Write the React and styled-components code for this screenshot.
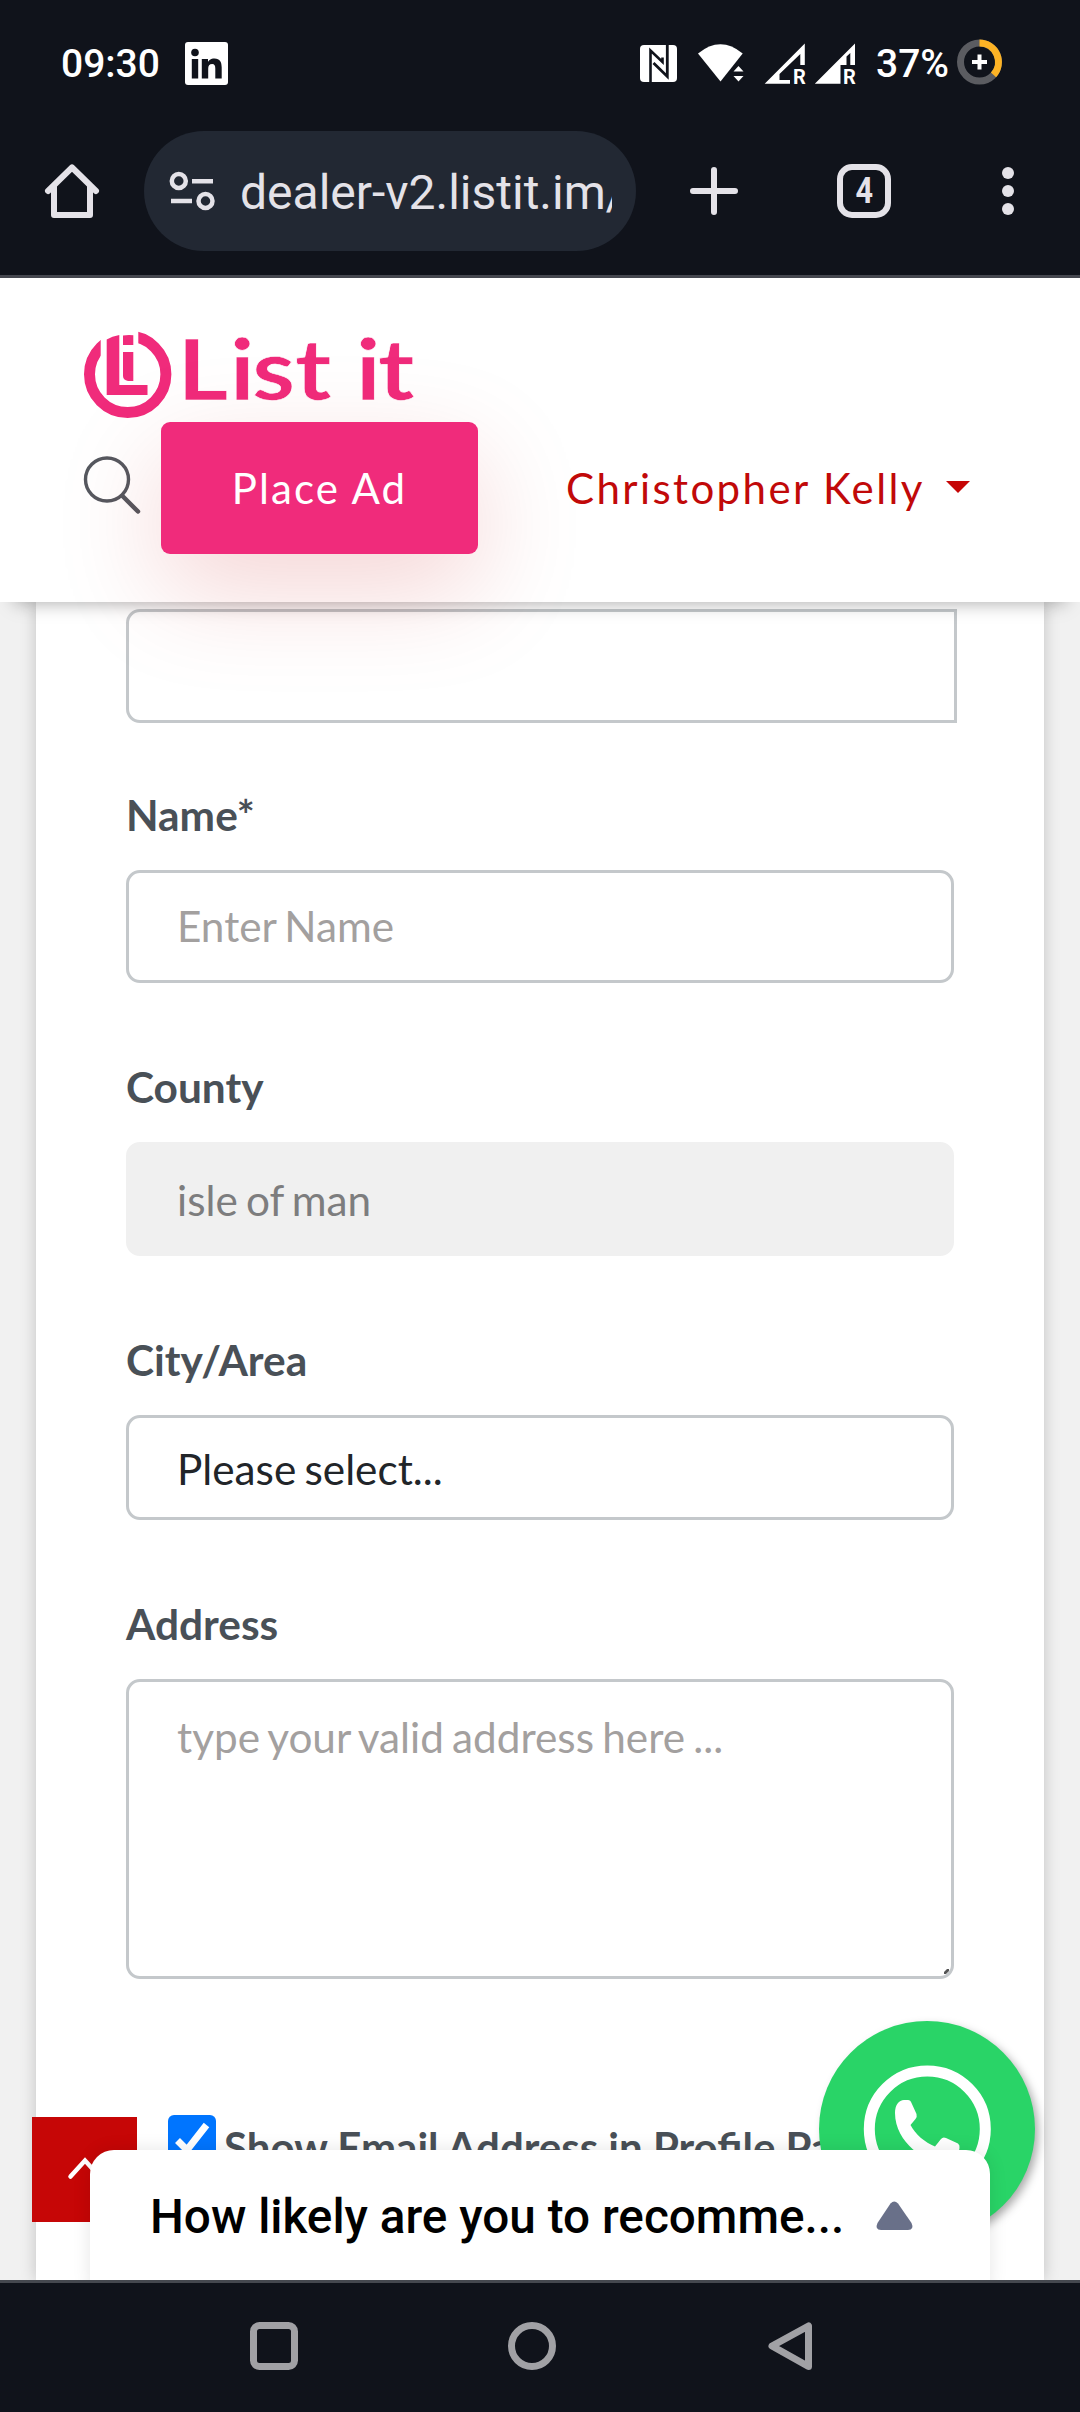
import React from "react";
import styled, { createGlobalStyle, css } from "styled-components";

const GlobalStyle = createGlobalStyle`
  *, *::before, *::after { box-sizing: border-box; }
  body { margin: 0; background: #10131b; }
`;

const lato = css`font-family: Lato, "Liberation Sans", sans-serif;`;
const roboto = css`font-family: Roboto, "Liberation Sans", sans-serif;`;

const Screen = styled.div`
  width: 1080px;
  height: 2412px;
  display: flex;
  flex-direction: column;
  overflow: hidden;
  background: #10131b;
`;

const Icon = styled.svg`
  display: block;
  flex: none;
  overflow: visible;
`;

/* ---------- system status bar ---------- */

const StatusBar = styled.div`
  height: 126px;
  flex: none;
  display: flex;
  align-items: center;
  padding: 0 78px 0 61px;
  color: #fff;
  ${roboto}
  font-weight: 500;
  font-size: 39px;
  line-height: 46px;
`;

const Clock = styled.span`
  width: 124px;
  padding-top: 2px;
`;

const StatusIcons = styled.div`
  margin-left: auto;
  display: flex;
  align-items: center;
`;

const Percent = styled.span`
  width: 71px;
  margin: 0 10px 0 19px;
  padding-top: 2px;
`;

/* ---------- browser toolbar ---------- */

const Toolbar = styled.div`
  height: 152px;
  flex: none;
  display: flex;
  align-items: flex-start;
  padding: 5px 66px 0 45px;
  border-bottom: 3px solid #45474f;
`;

const ToolButton = styled.div`
  height: 120px;
  margin-left: ${(p) => p.$gap || 0}px;
  display: flex;
  align-items: center;
`;

const UrlPill = styled.div`
  width: 492px;
  height: 120px;
  margin-left: 45px;
  padding: 0 24px;
  border-radius: 60px;
  background: #222833;
  display: flex;
  align-items: center;
`;

const UrlText = styled.span`
  width: 373px;
  margin: 3px 0 0 24px;
  overflow: hidden;
  white-space: nowrap;
  color: #e4e2e8;
  ${roboto}
  font-size: 48px;
  line-height: 60px;
`;

const TabCount = styled.div`
  width: 54px;
  height: 54px;
  border: 6px solid #e4e2e8;
  border-radius: 15px;
  display: flex;
  align-items: center;
  justify-content: center;
  color: #e4e2e8;
  ${roboto}
  font-weight: 700;
  font-size: 36px;
  line-height: 42px;
  span { transform: scaleX(0.85); }
`;

/* ---------- web page ---------- */

const Viewport = styled.main`
  position: relative;
  height: 2002px;
  flex: none;
  overflow: hidden;
  background: #f1f1f1;
`;

const SiteHeader = styled.header`
  position: relative;
  z-index: 1;
  height: 324px;
  padding: 54px 84px 0;
  background: #fff;
  box-shadow: 0 15px 18px -15px rgba(0, 0, 0, 0.36);
`;

const HeaderRow = styled.div`
  display: flex;
  align-items: center;
  height: 132px;
`;

const PlaceAd = styled.button`
  width: 317px;
  height: 132px;
  margin-left: 21px;
  padding: 0;
  border: 0;
  border-radius: 9px;
  background: #f02b7b;
  color: #fff;
  box-shadow: 0 36px 105px rgba(198, 6, 6, 0.17);
  ${lato}
  font-size: 42px;
  line-height: 63px;
  letter-spacing: 2.1px;
`;

const UserMenu = styled.div`
  display: flex;
  align-items: center;
  margin-left: 88px;
  color: #c10909;
  white-space: nowrap;
  ${lato}
  font-size: 42px;
  line-height: 63px;
  letter-spacing: 2.4px;
`;

const Caret = styled.i`
  margin: 0 0 3px 21px;
  border: 12px solid transparent;
  border-top-color: #c60606;
  border-bottom: 0;
`;

const Card = styled.form`
  margin: 0 36px;
  height: 1678px;
  padding: 7px 87px 0 90px;
  background: #fff;
  box-shadow: 0 0 15px rgba(0, 0, 0, 0.2);
`;

const control = css`
  display: block;
  width: 828px;
  margin: 0;
  border: 3px solid #c4c8cb;
  border-radius: 14px;
  padding: 0 48px;
  background: #fff;
  color: #212529;
  outline: 0;
  ${lato}
  font-size: 42.3px;
  line-height: 63px;
  word-spacing: -2.6px;
  &::placeholder { color: #a3a09f; opacity: 1; }
`;

const Input = styled.input`
  ${control}
  height: ${(p) => p.$h || 113}px;
  padding-bottom: ${(p) => (p.$h ? 0 : 2)}px;
  ${(p) => p.$cut && css`width: 831px; border-radius: 14px 0 0 14px;`}
  &:disabled { background: #f0f0f0; border-color: #f0f0f0; color: #7d7d7e; }
`;

const Select = styled.select`
  ${control}
  appearance: none;
  height: 105px;
  padding-top: 1px;
  opacity: 1;
`;

const AreaWrap = styled.div`
  position: relative;
  width: 828px;
`;

const TextArea = styled.textarea`
  ${control}
  height: 300px;
  padding-top: 23px;
  resize: none;
  overflow: hidden;
`;

const Grip = styled.svg`
  position: absolute;
  right: 5px;
  bottom: 5px;
`;

const Field = styled.div`
  margin-top: ${(p) => p.$gap || 71}px;
`;

const Label = styled.label`
  display: block;
  padding-top: 1px;
  margin-bottom: 24px;
  color: #495057;
  ${lato}
  font-weight: 700;
  font-size: 42.4px;
  line-height: 63px;
`;

const CheckRow = styled.div`
  display: flex;
  align-items: flex-start;
  margin: 136px 0 0 42px;
  color: #495057;
  white-space: nowrap;
  ${lato}
  font-weight: 700;
  font-size: 42px;
  line-height: 65px;
`;

const CheckBox = styled.span`
  width: 48px;
  height: 48px;
  margin-right: 8px;
  border-radius: 6px;
  background: #0075ff;
`;

/* ---------- floating widgets ---------- */

const BackToTop = styled.button`
  position: absolute;
  left: 32px;
  top: 1839px;
  width: 105px;
  height: 105px;
  padding: 0;
  border: 0;
  background: #c60606;
`;

const WhatsApp = styled.button`
  position: absolute;
  left: 819px;
  top: 1743px;
  width: 216px;
  height: 216px;
  padding: 0;
  border: 0;
  border-radius: 50%;
  background: #29d467;
  box-shadow: 4px 4px 10px -1px rgba(0, 0, 0, 0.35);
`;

const Survey = styled.section`
  position: absolute;
  left: 90px;
  top: 1872px;
  width: 900px;
  height: 140px;
  padding: 37px 77px 0 60px;
  border-radius: 24px 24px 0 0;
  background: #fff;
  box-shadow: 0 0 18px rgba(0, 0, 0, 0.1);
  display: flex;
  align-items: flex-start;
  justify-content: space-between;
`;

const SurveyTitle = styled.h2`
  margin: 0;
  color: #000;
  white-space: nowrap;
  ${roboto}
  font-weight: 500;
  font-size: 47.7px;
  line-height: 60px;
`;

const SurveyArrow = styled(Icon)`
  margin-top: 14px;
`;

/* ---------- system navigation ---------- */

const NavBar = styled.nav`
  flex: 1;
  display: flex;
  align-items: flex-start;
  padding: 39px 0 0 250px;
  border-top: 3px solid #45484f;
  gap: 210px;
`;

const LETTERS = [["L", 185, 6.6], ["i", 233.5, 3.3], ["s", 254, 1.7], ["t", 296, 0.8], ["i", 359.5, 3.3], ["t", 379, 0.8]];
const STRETCH = 1.17;

function Logo() {
  return (
    <Icon width="340" height="90" viewBox="84 332 340 90">
      <defs>
        <clipPath id="ringCut">
          <path d="M80 325H100.7V376H138.3V325H180V425H80Z" />
        </clipPath>
      </defs>
      <g fill="#f02b7b">
        <circle cx="127.7" cy="374.3" r="38.2" fill="none" stroke="#f02b7b" strokeWidth="11" clipPath="url(#ringCut)" />
        <path d="M106.7 339.5 Q112 336 119.3 335V385H147.5V395H106.7Z" />
        <path d="M123 335.5Q128 334.5 133.3 335.2V345H123Z" />
        <path d="M123 352H133.3V381H128Q123 380 123 376Z" />
        <text
          transform={`scale(${STRETCH} 1)`}
          x={LETTERS.map(([, x, b]) => (x / STRETCH - b).toFixed(1)).join(" ")}
          y="400"
          fontFamily="Lato, sans-serif"
          fontWeight="700"
          fontSize="84"
          stroke="#fff"
          strokeWidth="0.6"
        >
          {LETTERS.map(([c]) => c).join("")}
        </text>
      </g>
    </Icon>
  );
}

function StatusGlyphs() {
  return (
    <Icon width="217" height="46" viewBox="640 39 217 46" fill="#fff">
      <rect x="640" y="44" width="37" height="37" rx="4" />
      <path d="M650.500 81V49.500L662.500 61V56.500" fill="none" stroke="#10131b" strokeWidth="2.600" />
      <path d="M653.500 62L667.300 75.500V44" fill="none" stroke="#10131b" strokeWidth="2.800" />
      <path d="M698 52.500Q720.500 34 742.700 52.500L720.500 80.500Z" />
      <path d="M738.500 65L743.500 70.500H733.500ZM738.500 80.500L743.500 75H733.500Z" stroke="#10131b" strokeWidth="5" />
      <path d="M738.500 65L743.500 70.500H733.500ZM738.500 80.500L743.500 75H733.500Z" />
      <path d="M764.700 82.800L804.800 42.500V64H800.300V53L779.500 73V79H790V82.800Z" />
      <path d="M814.800 82.800L855 42.500V64H850.300V52L846.500 55.500V64H840.500V82.800Z" />
      <text x="793" y="82.800" fontFamily="Roboto, sans-serif" fontWeight="700" fontSize="20">R</text>
      <text x="843" y="82.800" fontFamily="Roboto, sans-serif" fontWeight="700" fontSize="20">R</text>
    </Icon>
  );
}

export default function App() {
  return (
    <Screen>
      <GlobalStyle />
      <StatusBar>
        <Clock>09:30</Clock>
        <Icon width="43" height="43" viewBox="0 0 43 43">
          <rect width="43" height="43" rx="3" fill="#fff" />
          <g fill="#10131b">
            <circle cx="10" cy="10.500" r="3.8" />
            <path d="M6.800 17H13.200V36.500H6.800ZM16.800 17H23V19.700C25 16.800 27.500 16.400 29.500 16.400C35 16.400 36.700 20 36.700 25.500V36.500H30.300V26.700C30.300 23.500 29.500 22 27.200 22C24.300 22 23.200 24 23.200 26.700V36.500H16.800Z" />
          </g>
        </Icon>
        <StatusIcons>
          <StatusGlyphs />
          <Percent>37%</Percent>
          <Icon width="45" height="45" viewBox="0 0 45 45" fill="none">
            <circle cx="22.500" cy="21" r="19" stroke="#5b5c61" strokeWidth="7" />
            <path d="M22.500 2A19 19 0 0 1 36.500 33.800" stroke="#fdb325" strokeWidth="7" />
            <path d="M22.500 13.500V28.500M15 21H30" stroke="#fff" strokeWidth="4" />
          </Icon>
        </StatusIcons>
      </StatusBar>

      <Toolbar>
        <ToolButton>
          <Icon width="54" height="54" viewBox="0 0 54 54" fill="none" stroke="#e4e2e8" strokeWidth="6" strokeLinecap="round" strokeLinejoin="round">
            <path d="M3 27L27 3.500L51 27M9 22V51H45V22" />
          </Icon>
        </ToolButton>
        <UrlPill>
          <Icon width="48" height="40" viewBox="168 171 48 40" fill="none" stroke="#e4e2e8" strokeWidth="4.500">
            <circle cx="178.800" cy="181" r="7" />
            <circle cx="205.500" cy="201" r="7" />
            <path d="M192 181.300H213M171 201H192" />
          </Icon>
          <UrlText>dealer-v2.listit.im/</UrlText>
        </UrlPill>
        <ToolButton $gap={54}>
          <Icon width="48" height="48" viewBox="0 0 48 48" stroke="#e4e2e8" strokeWidth="6" strokeLinecap="round">
            <path d="M24 3V45M3 24H45" />
          </Icon>
        </ToolButton>
        <ToolButton $gap={99}>
          <TabCount><span>4</span></TabCount>
        </ToolButton>
        <ToolButton $gap={111}>
          <Icon width="12" height="48" viewBox="0 0 12 48" fill="#e4e2e8">
            <circle cx="6" cy="6" r="6" />
            <circle cx="6" cy="24" r="6" />
            <circle cx="6" cy="42" r="6" />
          </Icon>
        </ToolButton>
      </Toolbar>

      <Viewport>
        <SiteHeader>
          <Logo />
          <HeaderRow>
            <Icon width="56" height="62" viewBox="84 457 56 62" fill="none" stroke="#55585f" strokeWidth="3.400">
              <circle cx="107" cy="479.500" r="21.500" />
              <path d="M122.500 496L138 511.500" strokeWidth="4.500" strokeLinecap="round" />
            </Icon>
            <PlaceAd type="button">Place Ad</PlaceAd>
            <UserMenu>
              Christopher Kelly
              <Caret />
            </UserMenu>
          </HeaderRow>
        </SiteHeader>

        <Card>
          <Input $h={114} $cut aria-label="Phone" />
          <Field $gap={59}>
            <Label>Name*</Label>
            <Input placeholder="Enter Name" />
          </Field>
          <Field>
            <Label>County</Label>
            <Input $h={114} defaultValue="isle of man" disabled />
          </Field>
          <Field>
            <Label>City/Area</Label>
            <Select>
              <option>Please select...</option>
            </Select>
          </Field>
          <Field>
            <Label>Address</Label>
            <AreaWrap>
              <TextArea placeholder="type your valid address here ..." />
              <Grip width="5" height="5" viewBox="0 0 5 5" fill="#555">
                <path d="M0 3L3 0H5V2L2 5H0Z" />
              </Grip>
            </AreaWrap>
          </Field>
          <CheckRow>
            <CheckBox>
              <Icon width="48" height="48" viewBox="0 0 48 48" fill="none" stroke="#fff" strokeWidth="7">
                <path d="M9.500 25.500L19 35L38.500 10" />
              </Icon>
            </CheckBox>
            Show Email Address in Profile Page
          </CheckRow>
        </Card>

        <BackToTop aria-label="Back to top">
          <Icon width="105" height="105" viewBox="0 0 105 105" fill="none" stroke="#fff" strokeWidth="4.500" strokeLinecap="round">
            <path d="M38.500 59.500L53 43.500L67.500 59.500" />
          </Icon>
        </BackToTop>
        <WhatsApp aria-label="WhatsApp">
          <Icon width="216" height="216" viewBox="0 0 216 216">
            <circle cx="108.300" cy="108" r="58" fill="none" stroke="#fff" strokeWidth="11" />
            <path
              fill="#fff"
              d="M76 92C76 84 80 79 85 79H89Q91.500 79 92.500 82L97.500 93Q98.300 95.500 96.500 98L91.500 104C96 113 106 121.500 116 125.500L122 118Q124 115.500 127 117L139 122.500Q141 124 140.500 127C140 137 130 142 123 142C108 142 76 122 76 92Z"
            />
          </Icon>
        </WhatsApp>
        <Survey>
          <SurveyTitle>How likely are you to recomme...</SurveyTitle>
          <SurveyArrow width="37" height="30" viewBox="0 0 37 30" fill="#697089">
            <path d="M14.500 2.500Q18.300 -1.500 22 2.500L35.500 22Q38.500 28.500 32 29H5Q-1.500 28.500 1.500 22Z" />
          </SurveyArrow>
        </Survey>
      </Viewport>

      <NavBar>
        <Icon width="48" height="48" viewBox="0 0 48 48" fill="none" stroke="#a1a1a5" strokeWidth="7">
          <rect x="3.500" y="3.500" width="41" height="41" rx="6" />
        </Icon>
        <Icon width="48" height="48" viewBox="0 0 48 48" fill="none" stroke="#a1a1a5" strokeWidth="7">
          <circle cx="24" cy="24" r="20.500" />
        </Icon>
        <Icon width="48" height="48" viewBox="0 0 48 48" fill="none" stroke="#a1a1a5" strokeWidth="7" strokeLinejoin="round">
          <path d="M6 24L42.500 4V44.500Z" />
        </Icon>
      </NavBar>
    </Screen>
  );
}
